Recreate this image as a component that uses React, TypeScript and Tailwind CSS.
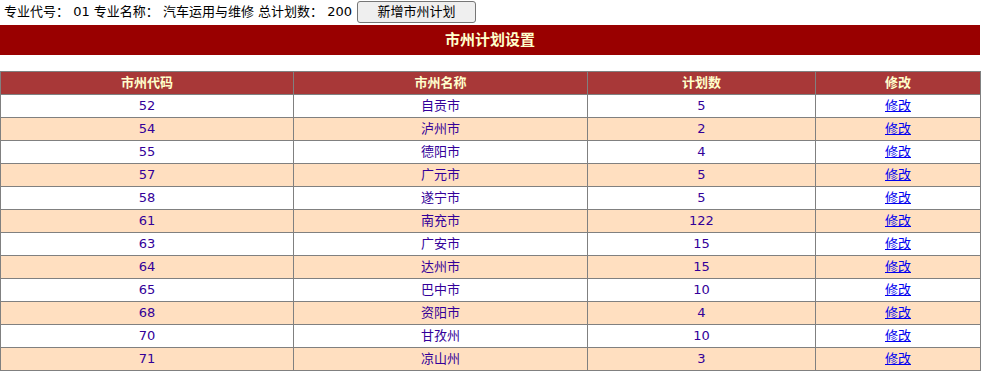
const rows = [
  { code: "52", name: "自贡市", count: 5 },
  { code: "54", name: "泸州市", count: 2 },
  { code: "55", name: "德阳市", count: 4 },
  { code: "57", name: "广元市", count: 5 },
  { code: "58", name: "遂宁市", count: 5 },
  { code: "61", name: "南充市", count: 122 },
  { code: "63", name: "广安市", count: 15 },
  { code: "64", name: "达州市", count: 15 },
  { code: "65", name: "巴中市", count: 10 },
  { code: "68", name: "资阳市", count: 4 },
  { code: "70", name: "甘孜州", count: 10 },
  { code: "71", name: "凉山州", count: 3 },
]

const font = "font-['DejaVu_Sans','Noto_Sans_CJK_SC',sans-serif]"

export default function App() {
  return (
    <div className={`${font} w-[987px] h-[373px] bg-white text-black`}>
      <div className="flex items-center h-[25px] pl-[4px] text-[13px] pb-[2px]">
        <span className="whitespace-pre">专业代号： 01 专业名称： 汽车运用与维修 总计划数： 200</span>
        <button className="ml-[5px] w-[119px] h-[22px] bg-[#efefef] border border-[#767676] rounded-[3px] text-[13px] leading-none">
          新增市州计划
        </button>
      </div>
      <div className="w-[980px] h-[30px] bg-[#990000] flex items-center justify-center text-[#ffffcc] font-bold text-[15px]">
        市州计划设置
      </div>
      <table className="mt-[16px] w-[980px] border-collapse text-[13px] table-fixed">
        <colgroup>
          <col className="w-[293px]" />
          <col className="w-[294px]" />
          <col className="w-[228px]" />
          <col className="w-[165px]" />
        </colgroup>
        <thead>
          <tr className="h-[23px] bg-[#a83838] text-[#ffffcc] font-bold">
            <th className="border border-[#808080] p-0">市州代码</th>
            <th className="border border-[#808080] p-0">市州名称</th>
            <th className="border border-[#808080] p-0">计划数</th>
            <th className="border border-[#808080] p-0">修改</th>
          </tr>
        </thead>
        <tbody>
          {rows.map((r, i) => (
            <tr key={r.code} className={`h-[23px] text-[#330099] ${i % 2 ? "bg-[#ffdfc0]" : "bg-white"}`}>
              <td className="border border-[#808080] p-0 text-center">{r.code}</td>
              <td className="border border-[#808080] p-0 text-center">{r.name}</td>
              <td className="border border-[#808080] p-0 text-center">{r.count}</td>
              <td className="border border-[#808080] p-0 text-center">
                <a href="#" className="text-[#0000ee] underline">修改</a>
              </td>
            </tr>
          ))}
        </tbody>
      </table>
    </div>
  )
}
